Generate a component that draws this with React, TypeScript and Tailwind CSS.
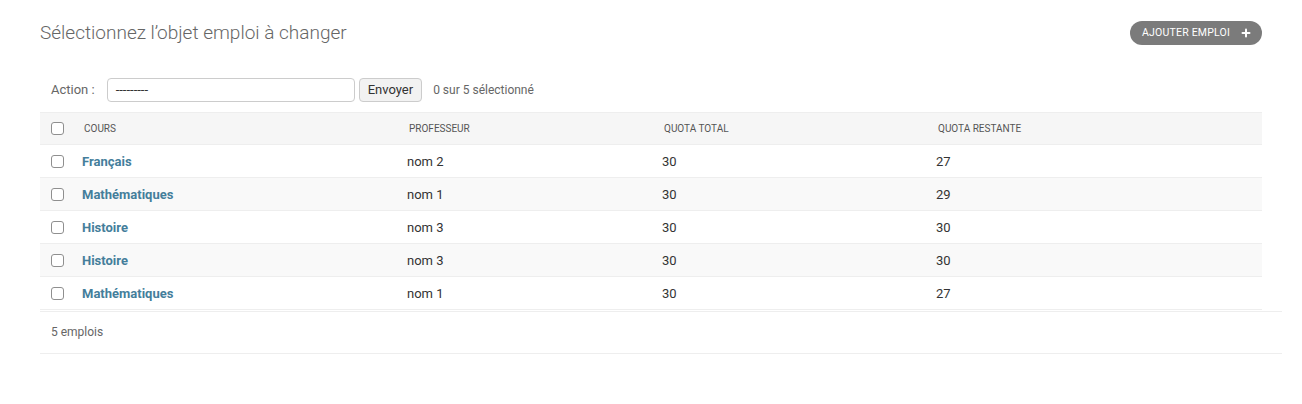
import { Plus } from "lucide-react";

type Row = { cours: string; prof: string; total: number; reste: number };

const rows: Row[] = [
  { cours: "Français", prof: "nom 2", total: 30, reste: 27 },
  { cours: "Mathématiques", prof: "nom 1", total: 30, reste: 29 },
  { cours: "Histoire", prof: "nom 3", total: 30, reste: 30 },
  { cours: "Histoire", prof: "nom 3", total: 30, reste: 30 },
  { cours: "Mathématiques", prof: "nom 1", total: 30, reste: 27 },
];

const cols = "grid grid-cols-[34px_325px_255px_274px_1fr] items-center";

function Box() {
  return <div className="w-[13px] h-[13px] rounded-[3px] border border-[#8f8f8f] bg-white" />;
}

export default function App() {
  return (
    <main
      className="min-h-screen bg-white px-10 text-[#333]"
      style={{ fontFamily: "Roboto, 'Liberation Sans', sans-serif" }}
    >
      <div className="flex items-center justify-between pt-[21px]">
        <h1 className="text-[19px] leading-[24px] font-light text-[#666]">
          Sélectionnez l’objet emploi à changer
        </h1>
        <a className="flex items-center h-[24px] rounded-full bg-[#7b7b7b] pl-3 pr-[10px] text-[10.5px] tracking-[0.2px] uppercase text-white">
          Ajouter emploi
          <Plus className="ml-[10px] w-[12px] h-[12px]" strokeWidth={4} />
        </a>
      </div>

      <div className="flex items-center pt-[33px] pb-[10px] pl-[11px] text-[13px]">
        <span className="text-[#666]">Action :</span>
        <div className="ml-[12px] w-[248px] h-[24px] rounded-[4px] border border-[#ccc] flex items-center px-2 text-[13px] text-[#333]">
          ---------
        </div>
        <button className="ml-[4px] h-[24px] px-[8px] rounded-[4px] border border-[#ccc] bg-[#f2f2f2] text-[13px] text-[#333]">
          Envoyer
        </button>
        <span className="ml-[11px] text-[12px] text-[#666]">0 sur 5 sélectionné</span>
      </div>

      <div className="border-t border-[#eee]">
        <div className={`${cols} h-[32px] bg-[#f6f6f6] border-b border-[#eee] text-[10px] font-normal uppercase text-[#555]`}>
          <div className="pl-[11px]"><Box /></div>
          <div className="pl-[10px]">Cours</div>
          <div className="pl-[10px]">Professeur</div>
          <div className="pl-[10px]">Quota total</div>
          <div className="pl-[10px]">Quota restante</div>
        </div>
        {rows.map((r, i) => (
          <div
            key={i}
            className={`${cols} h-[33px] border-b border-[#eee] text-[13px] ${i % 2 === 1 ? "bg-[#f9f9f9]" : "bg-white"}`}
          >
            <div className="pl-[11px]"><Box /></div>
            <div className="pl-[8px] pt-[1px] font-bold text-[#447e9b]">{r.cours}</div>
            <div className="pl-[8px] pt-[1px]">{r.prof}</div>
            <div className="pl-[8px] pt-[1px]">{r.total}</div>
            <div className="pl-[8px] pt-[1px]">{r.reste}</div>
          </div>
        ))}
      </div>

      <div className="-mr-5 mt-[1px] h-[43px] flex items-center pl-[11px] pb-[2px] border-t border-b border-[#eee] text-[12px] text-[#666]">
        5 emplois
      </div>
    </main>
  );
}
